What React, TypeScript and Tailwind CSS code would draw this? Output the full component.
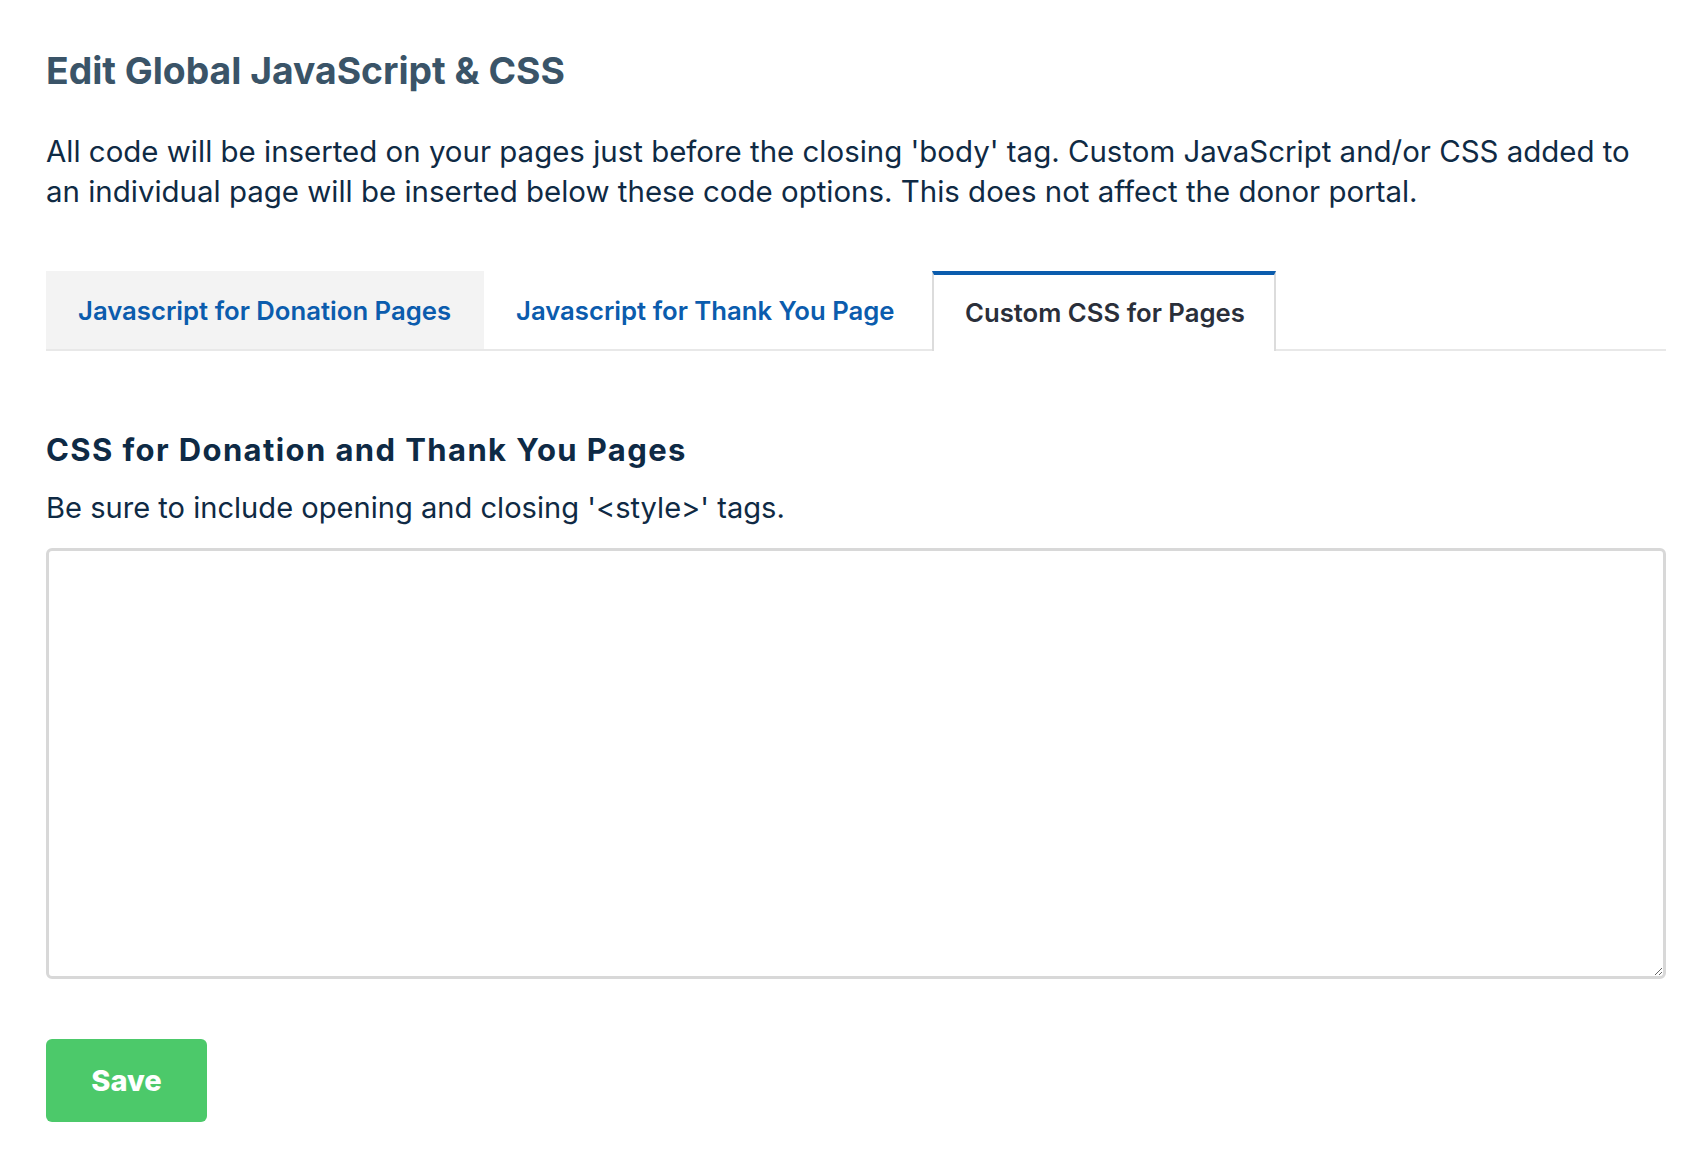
import React from "react";

export default function App() {
  return (
    <div
      className="min-h-screen bg-white pl-[46px] pr-[40px] pt-[48px]"
      style={{ fontFamily: "Inter, 'Open Sans', sans-serif" }}
    >
      <h1 className="text-[37.3px] leading-[46px] font-bold text-[#3a5468]">
        Edit Global JavaScript &amp; CSS
      </h1>
      <p className="mt-[37px] text-[29.45px] leading-[40px] text-[#0f2a44]">
        All code will be inserted on your pages just before the closing 'body' tag. Custom JavaScript and/or CSS added to
        <br />
        an individual page will be inserted below these code options. This does not affect the donor portal.
      </p>

      <div className="mt-[60px] flex border-b-2 border-[#e8e8e8]">
        <button className="h-[78px] w-[438px] bg-[#f3f3f3] text-[25.7px] font-semibold text-[#0b5cad] text-left pl-[32px] pt-[2px]">
          Javascript for Donation Pages
        </button>
        <button className="h-[78px] w-[448px] bg-white text-[25.7px] font-semibold text-[#0b5cad] text-left pl-[32px] pt-[2px]">
          Javascript for Thank You Page
        </button>
        <button className="-mb-[2px] h-[80px] w-[344px] border-x-2 border-t-4 border-x-[#dcdcdc] border-t-[#0b5cad] bg-white text-[25.7px] font-semibold text-[#2a2f3a] text-left pl-[31px] pt-[1px]">
          Custom CSS for Pages
        </button>
      </div>

      <h2 className="mt-[81px] text-[31px] leading-[35px] font-bold tracking-[1.4px] text-[#0e2a45]">
        CSS for Donation and Thank You Pages
      </h2>
      <p className="mt-[24px] text-[29.1px] leading-[34px] text-[#0f2a44]">
        Be sure to include opening and closing '&lt;style&gt;' tags.
      </p>

      <textarea className="mt-[23px] block h-[431px] w-full rounded-[6px] border-[3px] border-[#d8d8d8] bg-white outline-none" />

      <button className="mt-[60px] mb-[34px] h-[83px] w-[161px] rounded-[6px] bg-[#4cc96a] text-[29px] font-extrabold text-white">
        Save
      </button>
    </div>
  );
}
